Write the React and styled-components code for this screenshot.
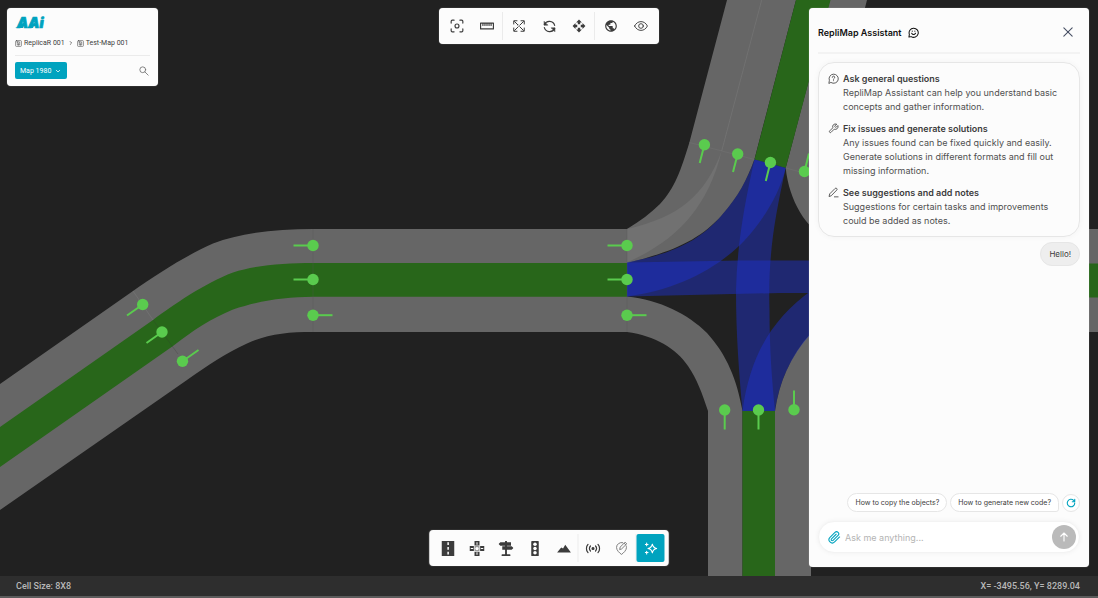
import React from "react";
import styled, { createGlobalStyle, css } from "styled-components";

const color = {
  teal: "#00a3bf",
  ink: "#3c3c3c",
  body: "#505050",
  surface: "#fcfcfc",
  line: "#ebebeb",
  canvas: "#212121",
  lane: "#666666",
  median: "#28661a",
  pin: "#5acb4e",
};

const GlobalStyle = createGlobalStyle`
  * { box-sizing: border-box; }
  body { margin: 0; background: ${color.canvas}; }
  button, input, select { font: inherit; color: inherit; }
  h1, h2, p, ul { margin: 0; padding: 0; }
`;

const Page = styled.div`
  display: flex;
  flex-direction: column;
  min-height: 100vh;
  font-family: Inter, "Liberation Sans", sans-serif;
  color: ${color.ink};
`;

const Workspace = styled.main`
  position: relative;
  flex: 1;
  display: flex;
  overflow: hidden;
`;

const MapDrawing = styled.svg`
  position: absolute;
  inset: 0;
  width: 100%;
  height: 100%;
`;

const floating = css`
  position: absolute;
  background: ${color.surface};
  border-radius: 4px;
  box-shadow: 0 0 1px rgba(255, 255, 255, 0.6);
`;

const IconButton = styled.button`
  display: flex;
  align-items: center;
  justify-content: center;
  flex: none;
  padding: 0;
  border: 0;
  width: ${(p) => p.$size || 28}px;
  height: ${(p) => p.$size || 28}px;
  border-radius: ${(p) => (p.$round ? "50%" : "2px")};
  color: ${(p) => p.$color || color.ink};
  background: ${(p) => p.$bg || "transparent"};
  cursor: pointer;
`;

/* ---------- project card ---------- */

const ProjectCard = styled.section`
  ${floating}
  top: 8px;
  left: 7px;
  width: 151px;
  padding: 5px 8px 7px;
`;

const Logo = styled.svg`
  display: block;
  width: 40px;
  height: 20px;
`;

const Crumbs = styled.nav`
  display: flex;
  align-items: center;
  gap: 4px;
  height: 23px;
  padding-bottom: 2px;
  border-bottom: 1px solid ${color.line};
  font-family: Roboto, sans-serif;
  font-size: 7px;
  margin-bottom: 6px;
`;

const Crumb = styled.a`
  display: flex;
  align-items: center;
  gap: 2px;
  color: inherit;
  text-decoration: none;
  white-space: nowrap;
`;

const CardRow = styled.div`
  display: flex;
  align-items: center;
  justify-content: space-between;
`;

const SelectBox = styled.label`
  display: grid;
  align-items: center;
  width: 52px;
  height: 17px;
  border-radius: 2px;
  background: ${color.teal};
  color: #fff;
  & > * { grid-area: 1 / 1; }
  & > svg { justify-self: end; margin-right: 6px; pointer-events: none; }
`;

const Select = styled.select`
  appearance: none;
  width: 100%;
  height: 17px;
  border: 0;
  padding: 0 12px 0 5px;
  background: transparent;
  font-family: Roboto, sans-serif;
  font-size: 7px;
`;

/* ---------- toolbars ---------- */

const Toolbar = styled.div`
  ${floating}
  display: flex;
  align-items: center;
  height: 36px;
  padding: 0 4px;
  left: 50%;
  transform: translateX(-50%);
  ${(p) => (p.$at === "top" ? "top: 8px;" : "bottom: 10px;")}
`;

const ToolGroup = styled.div`
  display: flex;
  gap: ${(p) => (p.$tight ? 1 : 2)}px;
  ${(p) => p.$divided && `border-left: 1px solid ${color.line};`}
  ${(p) => p.$divided && !p.$tight && "margin-left: 1px; padding-left: 2px;"}
`;

/* ---------- assistant ---------- */

const Assistant = styled.aside`
  ${floating}
  top: 8px;
  right: 9px;
  bottom: 9px;
  width: 280px;
  padding: 0 9px 14px;
  display: flex;
  flex-direction: column;
`;

const AssistantHeader = styled.header`
  display: flex;
  align-items: center;
  gap: 6px;
  height: 46px;
  padding-top: 4px;
  border-bottom: 2px solid #f3f3f3;
  margin-bottom: 8px;
  color: #111;
`;

const Title = styled.h1`
  font-size: 9px;
  font-weight: 600;
`;

const CloseButton = styled(IconButton)`
  margin: 0 1px 0 auto;
`;

const TipList = styled.ul`
  list-style: none;
  display: flex;
  flex-direction: column;
  gap: 8px;
  && { padding: 9px 9px 8px; }
  border: 1px solid #e6e6e6;
  border-radius: 16px;
  box-shadow: 0 0 6px rgba(0, 0, 0, 0.04);
`;

const Tip = styled.li`
  display: flex;
  gap: 4px;
  color: ${color.body};
  font-size: 9px;
  line-height: 14px;
  & > svg { flex: none; margin-top: 1px; }
`;

const TipTitle = styled.h2`
  color: ${color.ink};
  font-size: 9px;
  line-height: 14px;
  font-weight: 600;
`;

const Message = styled.p`
  align-self: flex-end;
  && { margin-top: 5px; padding: 0 8px; }
  height: 24px;
  line-height: 22px;
  border: 1px solid #e6e6e6;
  border-radius: 12px;
  background: #eeeeee;
  font-size: 8px;
`;

const Suggestions = styled.div`
  display: flex;
  justify-content: flex-end;
  align-items: center;
  gap: 3px;
  margin-top: auto;
  margin-bottom: 9px;
`;

const Chip = styled.button`
  height: 19px;
  padding: 0 7px;
  border: 1px solid #e6e6e6;
  border-radius: 10px;
  background: #fff;
  font-size: 7px;
  white-space: nowrap;
  cursor: pointer;
  ${(p) => p.$tail && "border-bottom-right-radius: 3px;"}
`;

const RefreshButton = styled(IconButton)`
  border: 1px solid #e6e6e6;
`;

const Composer = styled.form`
  display: flex;
  align-items: center;
  gap: 4px;
  height: 32px;
  padding: 0 3px 0 8px;
  border: 1px solid #f3f3f3;
  border-radius: 16px;
  background: #fff;
  box-shadow: 0 0 5px rgba(0, 0, 0, 0.05);
`;

const Prompt = styled.input`
  flex: 1;
  min-width: 0;
  border: 0;
  padding: 0;
  outline: 0;
  background: transparent;
  font-size: 9px;
  &::placeholder { color: #b4b4b4; opacity: 1; }
`;

const StatusBar = styled.footer`
  display: flex;
  justify-content: space-between;
  align-items: center;
  height: 22px;
  padding: 0 18px 0 16px;
  background: #2e2e2e;
  border-bottom: 2px solid #5c5c5c;
  color: #b8b8b8;
  font-family: Roboto, sans-serif;
  font-size: 9px;
  font-weight: 500;
`;

/* ---------- icons ---------- */

const Icon = ({ size = 14, box = 24, w = 2, children, ...rest }) => (
  <svg width={size} height={size} viewBox={`0 0 ${box} ${box}`} fill="none" stroke="currentColor"
    strokeWidth={w} strokeLinecap="round" strokeLinejoin="round" aria-hidden="true" {...rest}>
    {children}
  </svg>
);

const icons = {
  focus: (
    <Icon>
      <path d="M2 7V4a2 2 0 0 1 2-2h3M17 2h3a2 2 0 0 1 2 2v3M22 17v3a2 2 0 0 1-2 2h-3M7 22H4a2 2 0 0 1-2-2v-3" />
      <circle cx="12" cy="12" r="3.4" />
    </Icon>
  ),
  ruler: (
    <Icon w={2}>
      <path d="M1 7h22v10H1zM5 7v4M8.500 7v4M12 7v4M15.500 7v4M19 7v4" />
    </Icon>
  ),
  expand: (
    <Icon w={2} size={12}>
      <path d="M9.500 9.500 3 3M14.500 9.500 21 3M9.500 14.500 3 21M14.500 14.500 21 21M1.500 8V1.500H8M16 1.500h6.500V8M22.500 16v6.500H16M8 22.500H1.500V16" />
      <path d="m12 10 2 2-2 2-2-2z" strokeWidth="1" />
    </Icon>
  ),
  sync: (
    <Icon w={2.2} size={13}>
      <path d="M2.500 8.500A10.200 10.200 0 0 1 21.500 10M21.500 15.500A10.200 10.200 0 0 1 2.500 14" />
      <path d="M2 3v6.500h6.500zM22 21v-6.500h-6.500z" fill="currentColor" strokeWidth="1" />
    </Icon>
  ),
  move: (
    <Icon size={14} stroke="none">
      <path fill="currentColor" d="M10 9h4V6h3l-5-5-5 5h3v3zm-1 1H6V7l-5 5 5 5v-3h3v-4zm14 2l-5-5v3h-3v4h3v3l5-5zm-9 3h-4v3H7l5 5 5-5h-3v-3z" />
    </Icon>
  ),
  globe: (
    <Icon stroke="none">
      <path fill="currentColor" d="M12 2C6.480 2 2 6.480 2 12s4.480 10 10 10 10-4.480 10-10S17.520 2 12 2zm-1 17.930c-3.950-.49-7-3.850-7-7.930 0-.62.080-1.210.21-1.790L9 15v1c0 1.100.9 2 2 2v1.930zm6.900-2.540c-.26-.81-1-1.390-1.900-1.390h-1v-3c0-.55-.45-1-1-1H8v-2h2c.55 0 1-.45 1-1V7h2c1.100 0 2-.9 2-2v-.41c2.930 1.190 5 4.060 5 7.410 0 2.080-.8 3.970-2.100 5.390z" />
    </Icon>
  ),
  eye: (
    <Icon w={1.6}>
      <path d="M1 12C3.500 7 7.500 4.500 12 4.500S20.500 7 23 12c-2.500 5-6.500 7.500-11 7.500S3.500 17 1 12z" />
      <circle cx="12" cy="12" r="4" />
    </Icon>
  ),
  road: (
    <Icon size={15} stroke="none">
      <path fill="currentColor" d="M2 0h20v24H2z" />
      <path fill="#fff" d="M11 2h2.400v4.500H11zM11 9.500h2.400V14H11zM11 17h2.400v4.500H11z" />
    </Icon>
  ),
  crossing: (
    <Icon size={15} stroke="none">
      <path fill="currentColor" d="M8 0h8v7H8zM8 17h8v7H8zM0 8h7v8H0zM17 8h7v8h-7z" />
      <path fill="#fff" d="M11.200 2h1.600v4h-1.600zM11.200 18h1.600v4h-1.600zM2 11.200h4v1.600H2zM18 11.200h4v1.600h-4z" />
      <path fill="#9a9a9a" d="M8 8h8v8H8z" />
      <circle cx="12" cy="12" r="2.600" fill="#fff" />
    </Icon>
  ),
  signpost: (
    <Icon size={15} stroke="none">
      <path fill="currentColor" d="M10.500 0h3v2H20v5.500h-6.500v1H21l3 2.700-3 2.800h-7.500v7H18a1 1 0 0 1 1 1v2H5v-2a1 1 0 0 1 1-1h4.500v-7H6V8.500h4.500v-1H3L0 4.800 3 2h7.500z" />
    </Icon>
  ),
  signal: (
    <Icon size={15} stroke="none">
      <rect x="6" y="0" width="12" height="24" rx="1" fill="currentColor" />
      <g fill="#fff">
        <circle cx="12" cy="5.200" r="2.800" />
        <circle cx="12" cy="12" r="2.800" />
        <circle cx="12" cy="18.800" r="2.800" />
      </g>
    </Icon>
  ),
  terrain: (
    <Icon size={15} stroke="none">
      <path fill="currentColor" d="M1 18.500 7.500 10.500l3 1.500L14 6l9 12.500z" />
    </Icon>
  ),
  radio: (
    <Icon size={15}>
      <circle cx="12" cy="12" r="1.500" fill="currentColor" />
      <path d="M8 8a5.500 5.500 0 0 0 0 8M16 8a5.500 5.500 0 0 1 0 8M4 5.500a9.500 9.500 0 0 0 0 13M20 5.500a9.500 9.500 0 0 1 0 13" />
    </Icon>
  ),
  pinEdit: (
    <Icon size={14} w={1.6}>
      <path d="M14 2.800A8.500 8.500 0 0 0 3.500 11c0 5 5 9.500 8.500 12 3.500-2.500 8.500-7 8.500-12 0-.8-.1-1.500-.3-2.300" />
      <path d="m9 14 .8-3.600L18.200 2l2.800 2.800-8.400 8.400zM16.500 3.800l2.800 2.800" />
    </Icon>
  ),
  sparkle: (
    <Icon size={13} w={2}>
      <path d="M14.500 4c1 5 3 7 8 8-5 1-7 3-8 8-1-5-3-7-8-8 5-1 7-3 8-8z" />
      <path d="M4 2v5M1.500 4.500h5M4 17v5M1.500 19.500h5" />
    </Icon>
  ),
  search: (
    <Icon size={10} w={2}>
      <circle cx="9" cy="9" r="7" />
      <path d="m14 14 8 8" />
    </Icon>
  ),
  project: (
    <Icon size={7} w={1.8}>
      <path d="M5 2h14a3 3 0 0 1 3 3v14a3 3 0 0 1-3 3H5a3 3 0 0 1-3-3V5a3 3 0 0 1 3-3z" />
      <path d="M8 8v9h8V8zM12 12v5M6 6h4" />
    </Icon>
  ),
  right: <Icon size={4} w={4}><path d="m7 3 9 9-9 9" /></Icon>,
  down: <Icon size={6} w={3}><path d="m5 9 7 7 7-7" /></Icon>,
  close: <Icon size={10} w={2.6} stroke="#475064"><path d="M2 2l20 20M22 2 2 22" /></Icon>,
  smile: (
    <Icon size={11} w={2.2}>
      <path d="M2 22l1-6a10 10 0 1 1 4 5z" />
      <path d="M8 13.500c1 2 2.400 3 4.200 3s3.200-1 4.200-3M9.300 8.500v1M15 8.500v1" />
    </Icon>
  ),
  question: (
    <Icon size={11}>
      <path d="M2 22l1-6a10 10 0 1 1 4 5z" />
      <path d="M9.300 9.500a2.700 2.700 0 1 1 3.900 2.400c-.8.500-1.200.9-1.200 1.900M12 16.800v.1" />
    </Icon>
  ),
  wrench: (
    <Icon size={11}>
      <path d="M14.700 6.300a1 1 0 0 0 0 1.400l1.600 1.600a1 1 0 0 0 1.400 0l3.800-3.800a6 6 0 0 1-7.900 7.900l-6.900 6.900a2.100 2.100 0 0 1-3-3l6.900-6.900a6 6 0 0 1 7.900-7.900z" />
    </Icon>
  ),
  pen: (
    <Icon size={11}>
      <path d="M2.500 20l1.200-5L15.500 3.200a2.400 2.400 0 0 1 3.600 3.500L7.500 18.600zM14 21.500h8" />
    </Icon>
  ),
  reload: (
    <Icon size={10} w={2.6}>
      <path d="M21 12a9 9 0 1 1-2.700-6.400L21 8.500M21 3v6h-6" />
    </Icon>
  ),
  clip: (
    <Icon size={13} w={2}>
      <path d="m21.400 11-9.200 9.200a6 6 0 0 1-8.500-8.500l9.200-9.200a4 4 0 0 1 5.700 5.700l-9.200 9.200a2 2 0 0 1-2.900-2.900L15 6" />
    </Icon>
  ),
  up: <Icon size={12} w={2.2}><path d="M12 20V4M5.500 10.500 12 4l6.500 6.500" /></Icon>,
};

/* ---------- road map ---------- */

const pins = [
  [313, 245.5, 293.5, 245.5], [313, 279.5, 293.5, 279.5], [313, 315.2, 332.5, 315.2],
  [627, 245.5, 607.5, 245.5], [627, 279.5, 607.5, 279.5], [627, 315.2, 646.5, 315.2],
  [142.7, 304.5, 127, 315.5], [162, 332, 146.5, 343], [182.5, 361.2, 198.5, 350],
  [704.4, 144.7, 699.7, 163], [737.7, 154, 733, 172], [770.4, 162.5, 765.8, 181],
  [804.5, 171.5, 809, 153.5],
  [724.7, 410, 724.7, 429.5], [758.5, 410, 758.5, 429.5], [794, 409.7, 794, 390.5],
];

const RoadMap = () => (
  <MapDrawing viewBox="0 0 1098 576" preserveAspectRatio="xMidYMid slice" role="img" aria-label="Road map">
    <g fill={color.lane}>
      <path d="M0 384 133 291C157 274 187 255 213 243.500C240 233 275 229 313 229H627V332H313C287 332 268 334 247 343.500C226 353 207 366 187 380L0 510Z" />
      <path d="M727 0 689.500 142C681 170 675 188 660 204C651 213 640 221 627 229V263C672 252 700 240 722 215C738 197 747 180 754.500 159L796 0Z" />
      <path d="M627 296.500C660 300 688 314 707 333C727 355 737 380 742.500 411V576H708V411C702 393 697 379 688 366C676 348 655 336 627 332Z" />
      <path d="M830 0H867L826 160 830 240C806 230 789 200 785.700 168Z" />
      <path d="M775 411C779 383 790 356 811 333V576H775Z" />
      <path d="M1040 229h58v103h-58z" />
    </g>
    <g fill={color.median}>
      <path d="M0 427 153 320C173 305 205 283 233 272.500C256 265 285 263 313 263H627V296.700H313C285 297 262 300 233 309.500C212 318 192 331 173 346L0 467Z" />
      <path d="M796 0H830.500L785.700 168 754.500 159.500Z" />
      <path d="M742.500 411H775V576H742.500Z" />
      <path d="M1040 263.500h58v34h-58z" />
    </g>
    <path fill="#717171" d="M627 229C680 217 705 195 721.700 151C707 210 675 241 627 262.500Z" />
    <g fill="#1d30cd" fillOpacity=".47">
      <path d="M627 262.500C672 254 700 241 722 215C738 197 747 180 754.500 159.500L785.700 168C779 195 764 219 744 241C716 270 675 290 627 296.500Z" />
      <path d="M627 262.500 740 260.500H812V293H780L627 296.500Z" />
      <path d="M754.500 159.500 785.700 168C774 221 768 257 769.500 310C769.500 350 772 380 775 411H742.500C739 372 736 335 736 290C737 247 744 205 754.500 159.500Z" />
      <path d="M742.500 411C750 355 772 319 812 290V333C790 356 779 383 775 411Z" />
    </g>
    <g stroke="#747474" strokeWidth=".8" fill="none">
      <path d="M761.700 0 721.700 151M133 291 153 320" />
      <path d="M689.500 142.500 754.500 159.500M785.700 168 812 175" strokeOpacity=".6" />
      <path d="M313 229V332M627 229V332" stroke="#555" strokeOpacity=".4" />
      <path d="M153 320 178 354" stroke="#333" strokeOpacity=".3" />
    </g>
    <g stroke={color.pin} fill={color.pin} strokeWidth="2">
      {pins.map(([x, y, tx, ty]) => (
        <g key={`${x}-${y}`}>
          <path d={`M${x} ${y}L${tx} ${ty}`} />
          <circle cx={x} cy={y} r="5.700" stroke="none" />
        </g>
      ))}
    </g>
  </MapDrawing>
);

const Tool = ({ name, label, ...rest }) => (
  <IconButton type="button" aria-label={label} {...rest}>{icons[name]}</IconButton>
);

const tips = [
  ["question", "Ask general questions", "RepliMap Assistant can help you understand basic concepts and gather information."],
  ["wrench", "Fix issues and generate solutions", "Any issues found can be fixed quickly and easily. Generate solutions in different formats and fill out missing information."],
  ["pen", "See suggestions and add notes", "Suggestions for certain tasks and improvements could be added as notes."],
];

export default function App() {
  return (
    <Page>
      <GlobalStyle />
      <Workspace>
        <RoadMap />

        <ProjectCard>
          <Logo viewBox="0 0 40 20" role="img" aria-label="AAi">
            <text x="2" y="15" fontFamily="Inter, sans-serif" fontSize="14" fontWeight="900" fontStyle="italic"
              fill={color.teal} stroke={color.teal} strokeWidth=".7">AAi</text>
            <path d="M0 15C4 14 8 11 11 7L8 15ZM12 15C15 14 18 12 21 8L18 15Z" fill={color.teal} />
          </Logo>
          <Crumbs aria-label="Breadcrumb">
            <Crumb href="#project">{icons.project}ReplicaR 001</Crumb>
            {icons.right}
            <Crumb href="#map">{icons.project}Test-Map 001</Crumb>
          </Crumbs>
          <CardRow>
            <SelectBox>
              <Select aria-label="Map" defaultValue="1980">
                <option value="1980">Map 1980</option>
              </Select>
              {icons.down}
            </SelectBox>
            <Tool name="search" label="Search" $size={12} $color="#707070" />
          </CardRow>
        </ProjectCard>

        <Toolbar $at="top" role="toolbar" aria-label="View tools">
          <ToolGroup>
            <Tool name="focus" label="Focus" />
            <Tool name="ruler" label="Measure" />
          </ToolGroup>
          <ToolGroup $divided>
            <Tool name="expand" label="Fit view" />
            <Tool name="sync" label="Rotate" />
            <Tool name="move" label="Pan" />
          </ToolGroup>
          <ToolGroup $divided>
            <Tool name="globe" label="Globe" />
            <Tool name="eye" label="Visibility" />
          </ToolGroup>
        </Toolbar>

        <Toolbar $at="bottom" role="toolbar" aria-label="Map objects">
          <ToolGroup $tight>
            <Tool name="road" label="Road" />
            <Tool name="crossing" label="Junction" />
            <Tool name="signpost" label="Sign" />
            <Tool name="signal" label="Traffic light" />
            <Tool name="terrain" label="Terrain" />
          </ToolGroup>
          <ToolGroup $tight $divided>
            <Tool name="radio" label="Signal" />
            <Tool name="pinEdit" label="Edit pin" $color="#777" />
          </ToolGroup>
          <ToolGroup $tight $divided>
            <Tool name="sparkle" label="Assistant" $bg={color.teal} $color="#fff" />
          </ToolGroup>
        </Toolbar>

        <Assistant>
          <AssistantHeader>
            <Title>RepliMap Assistant</Title>
            {icons.smile}
            <CloseButton type="button" aria-label="Close" $size={22}>{icons.close}</CloseButton>
          </AssistantHeader>
          <TipList>
            {tips.map(([icon, title, body]) => (
              <Tip key={icon}>
                {icons[icon]}
                <div>
                  <TipTitle>{title}</TipTitle>
                  <p>{body}</p>
                </div>
              </Tip>
            ))}
          </TipList>
          <Message>Hello!</Message>
          <Suggestions>
            <Chip type="button">How to copy the objects?</Chip>
            <Chip type="button" $tail>How to generate new code?</Chip>
            <RefreshButton type="button" aria-label="More suggestions" $size={18} $round $bg="#fff" $color={color.teal}>
              {icons.reload}
            </RefreshButton>
          </Suggestions>
          <Composer onSubmit={(e) => e.preventDefault()}>
            <Tool name="clip" label="Attach file" $size={14} $color={color.teal} />
            <Prompt aria-label="Message" placeholder="Ask me anything..." />
            <IconButton type="submit" aria-label="Send" $size={24} $round $bg="#bababa" $color="#fff">{icons.up}</IconButton>
          </Composer>
        </Assistant>
      </Workspace>
      <StatusBar>
        <span>Cell Size: 8X8</span>
        <span>X= -3495.56, Y= 8289.04</span>
      </StatusBar>
    </Page>
  );
}
